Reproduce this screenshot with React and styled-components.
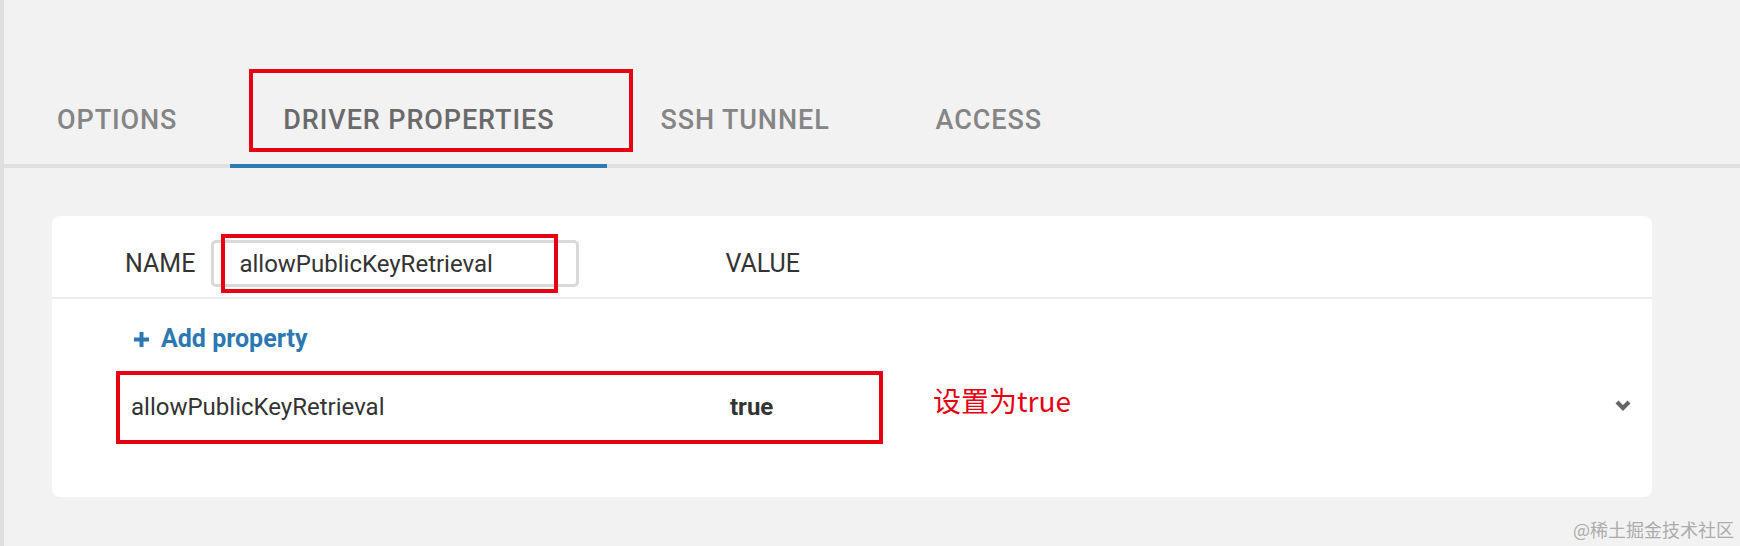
import styled, { createGlobalStyle } from "styled-components";

const GlobalStyle = createGlobalStyle`
  html, body {
    margin: 0;
    padding: 0;
    background: #f2f2f2;
  }
  body {
    font-family: Roboto, "Noto Sans CJK SC", sans-serif;
  }
`;

const Page = styled.div`
  position: relative;
  height: 546px;
  box-sizing: border-box;
  border-left: 4px solid #dfdfdf;
  overflow: hidden;
`;

const TabBar = styled.div`
  display: flex;
  padding-top: 80px;
  border-bottom: 4px solid #e0e0e0;
`;

const Tab = styled.div`
  position: relative;
  padding: 25px 53px 29px;
  margin-bottom: -4px;
  border-bottom: 4px solid ${(p) => (p.$active ? "#2e7bb4" : "transparent")};
  font-size: 27px;
  font-weight: 500;
  line-height: 30px;
  letter-spacing: 0.9px;
  color: ${(p) => (p.$active ? "#6a6a6a" : "#858585")};
  white-space: nowrap;
`;

// rote Markierungen aus dem Screenshot
const Mark = styled.div`
  position: absolute;
  box-sizing: border-box;
  border: 4px solid #e60012;
  pointer-events: none;
`;

const TabMark = styled(Mark)`
  left: 19px;
  top: -11px;
  width: 384px;
  height: 83px;
`;

const Content = styled.div`
  padding: 48px 88px 0 48px;
`;

const Card = styled.div`
  background: #ffffff;
  border-radius: 8px;
  height: 281px;
  box-sizing: border-box;
`;

const CardHeader = styled.div`
  display: flex;
  align-items: center;
  padding: 24px 0 10px 73px;
  border-bottom: 2px solid #ececec;
`;

const HeaderLabel = styled.span`
  font-size: 25px;
  line-height: 30px;
  color: #333333;
  margin-left: ${(p) => p.$offset || 0}px;
`;

const FieldWrap = styled.div`
  position: relative;
  margin-left: 16px;
`;

const NameInput = styled.input`
  display: block;
  width: 368px;
  height: 47px;
  box-sizing: border-box;
  border: 3px solid #d9d9d9;
  border-radius: 5px;
  padding: 0 0 0 25px;
  font-family: Roboto, sans-serif;
  font-size: 24px;
  color: #333333;
  background: #ffffff;
  outline: none;
`;

const FieldMark = styled(Mark)`
  left: 10px;
  top: -6px;
  width: 337px;
  height: 59px;
`;

const CardBody = styled.div`
  padding: 25px 21px 0 67px;
`;

const AddButton = styled.div`
  display: flex;
  align-items: center;
  gap: 11px;
  margin-left: 14px;
  font-size: 25px;
  font-weight: 700;
  line-height: 30px;
  color: #2c78b2;
`;

const PropRow = styled.div`
  position: relative;
  display: flex;
  align-items: center;
  height: 70px;
  margin-top: 18px;
  padding-left: 12px;
`;

const PropName = styled.span`
  width: 599px;
  font-size: 24px;
  line-height: 30px;
  color: #333333;
`;

const PropValue = styled.span`
  font-size: 24px;
  font-weight: 700;
  line-height: 30px;
  color: #333333;
`;

const RowMark = styled(Mark)`
  left: -3px;
  top: -1px;
  width: 767px;
  height: 73px;
`;

const Note = styled.span`
  position: absolute;
  left: 814px;
  top: 14px;
  font-family: "Noto Sans CJK SC", sans-serif;
  font-size: 28px;
  line-height: 28px;
  color: #e60012;
`;

const Chevron = styled.svg`
  margin-left: auto;
  margin-top: -3px;
  overflow: visible;
`;

const Watermark = styled.div`
  position: absolute;
  right: 6px;
  bottom: 8px;
  font-family: "Noto Sans CJK SC", sans-serif;
  font-size: 18px;
  line-height: 18px;
  color: #acacac;
`;

const tabs = ["OPTIONS", "DRIVER PROPERTIES", "SSH TUNNEL", "ACCESS"];

export default function App() {
  return (
    <>
      <GlobalStyle />
      <Page>
        <TabBar>
          {tabs.map((t) => (
            <Tab key={t} $active={t === "DRIVER PROPERTIES"}>
              {t}
              {t === "DRIVER PROPERTIES" && <TabMark />}
            </Tab>
          ))}
        </TabBar>
        <Content>
          <Card>
            <CardHeader>
              <HeaderLabel>NAME</HeaderLabel>
              <FieldWrap>
                <NameInput defaultValue="allowPublicKeyRetrieval" readOnly />
                <FieldMark />
              </FieldWrap>
              <HeaderLabel $offset={146}>VALUE</HeaderLabel>
            </CardHeader>
            <CardBody>
              <AddButton>
                <svg width="17" height="17" viewBox="0 0 17 17">
                  <path d="M8.5 1V16M1 8.5H16" stroke="#2c78b2" strokeWidth="4" fill="none" />
                </svg>
                Add property
              </AddButton>
              <PropRow>
                <PropName>allowPublicKeyRetrieval</PropName>
                <PropValue>true</PropValue>
                <RowMark />
                <Note>设置为true</Note>
                <Chevron width="16" height="11" viewBox="0 0 16 11">
                  <polyline points="2,2 8,8 14,2" fill="none" stroke="#666666" strokeWidth="4.2" />
                </Chevron>
              </PropRow>
            </CardBody>
          </Card>
        </Content>
        <Watermark>@稀土掘金技术社区</Watermark>
      </Page>
    </>
  );
}
